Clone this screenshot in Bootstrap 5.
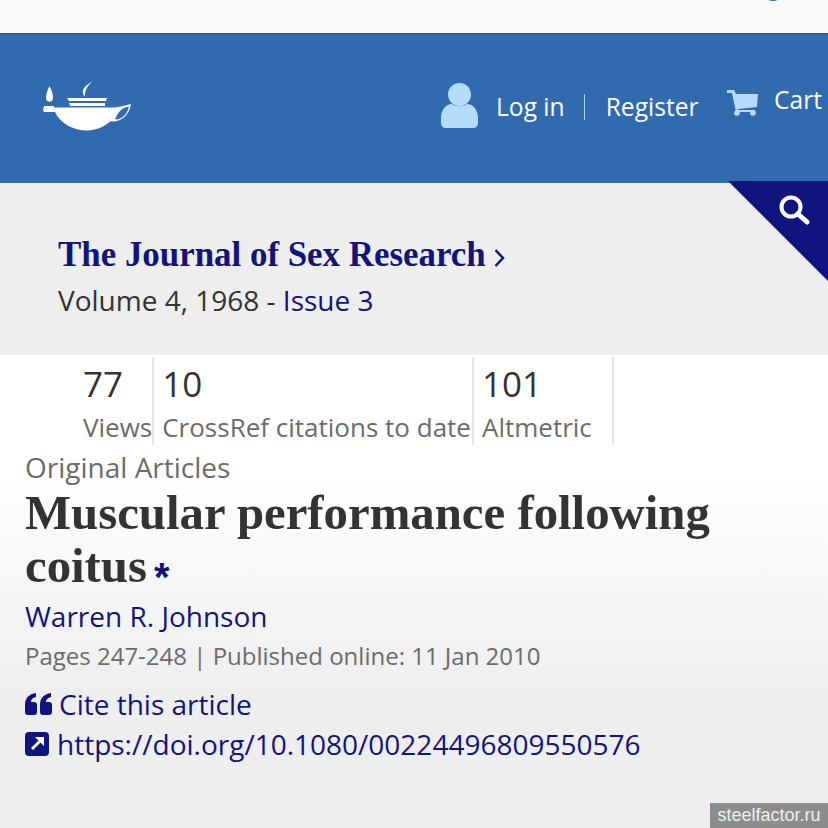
<!DOCTYPE html>
<html lang="en"><head><meta charset="utf-8"><title>Muscular performance following coitus</title>
<link href="https://cdn.jsdelivr.net/npm/bootstrap@5.3.0/dist/css/bootstrap.min.css" rel="stylesheet">
<style>
html,body{height:828px;overflow:hidden}
body{font-family:"Open Sans","Noto Sans",sans-serif;background:#eee;color:#333;position:relative;width:828px}
a{text-decoration:none;color:#10147e}
.strip{height:33px;background:#f8f8f8;position:relative;overflow:hidden}
.dot{position:absolute;left:766px;top:-7px;width:14px;height:8px;border-radius:50%;background:#2f6bae}
.masthead{height:150px;background:#2f6bae;border-top:1px solid #23568f;padding-left:43px}
.lamp{display:block;width:88px;height:50px;margin-top:47px}
.acct{position:absolute;left:441px;top:84px;height:46px}
.acct a{color:#fff;font-size:24.6px;font-weight:500;line-height:32px}
.sep{width:1px;height:26px;background:#a9d3f5;margin:0 21px 0 19px}
.cartlink{position:absolute;left:727px;top:84px;height:32px}
.cartlink a{color:#fff;font-size:24.6px;font-weight:500;line-height:32px}
.journal{height:172px;padding:50px 0 0 58px;position:relative}
.jname{font-family:"Liberation Serif",serif;font-weight:700;font-size:34.9px;line-height:44px;color:#10147e}
.vol{font-size:28px;line-height:36px;margin-top:5px}
.corner{position:absolute;right:0;top:-2px;width:100px;height:100px;background:#10147e;clip-path:polygon(0 0,100% 0,100% 100%)}
.article{height:473px;background:linear-gradient(#fff 0,#fff 120px,#eee 340px);padding:2px 0 0 25px}
.stats{margin-left:47px}
.stat{border-right:2px solid #e4e4e4;padding:0 1px 0 8px;height:88px}
.stat:first-child{padding:0 0 0 11px}
.num{font-size:35px;line-height:54px;color:#333}
.lbl{font-size:26px;line-height:32px;color:#6b6b6b;white-space:nowrap}
.cat{font-size:28px;line-height:36px;color:#6b6b6b;margin-top:4px}
h1.ttl{font-family:"Liberation Serif",serif;font-weight:700;font-size:48.8px;line-height:53px;color:#333;margin:2px 0 0}
.ast{color:#10147e;font-size:40px;font-family:"Liberation Sans",sans-serif;margin-left:7px;display:inline-block;height:30px;line-height:30px;vertical-align:-9px}
.auth{font-size:28px;line-height:36px;margin-top:5px}
.meta{font-size:24px;line-height:34px;color:#6b6b6b;margin-top:5px}
.lnk{font-size:28px;line-height:38px}
.wm{position:absolute;right:0;bottom:0;width:118px;height:25px;background:#8c8c8c;color:#eee;font-family:"Liberation Sans",sans-serif;font-size:18px;line-height:25px;text-align:center}
</style></head><body>
<div class="strip"><span class="dot"></span></div>
<header class="masthead">
<svg class="lamp" viewBox="0 0 88 50" fill="#fff"><path d="M6.500 5C4.500 9 3 13 3 17C3 22 10 22 10 17C10 13 8.500 9 6.500 5Z"/><path d="M50 0C43 4 39 8 40 11.500C40 13.500 41 14.500 42 15.500C41.500 9 45 4 50 0Z"/><path d="M24 17H64L63 20H26Z"/><path d="M26 22H62V25H27Z"/><path fill-rule="evenodd" d="M1 25H11V26.500H72C77 25.500 83 24.500 88 23C86 34 79 40.500 70 40.500H67C61 46 53 49.500 44 49.500C30 49.500 17 42 12 31H1L0 29Z M86 25.500C79 26.500 75 31 72 38.500C80 38.500 84 33 86 25.500Z"/></svg>
</header>
<div class="acct d-flex align-items-center"><svg width="37" height="46" viewBox="0 0 37 46" fill="#b5dcfb" style="margin-top:-2px"><circle cx="18.500" cy="11.500" r="11.500"/><path d="M0 35C0 27 5 21 11 21C14 24 23 24 26 21C32 21 37 27 37 35V40C37 43 35 45 32 45H5C2 45 0 43 0 40Z"/></svg><a href="#" style="margin-left:18px">Log in</a><span class="sep"></span><a href="#">Register</a></div>
<div class="cartlink d-flex align-items-center"><svg width="32" height="27" viewBox="0 0 32 27" fill="#b5dcfb" style="margin-top:5px"><path d="M0 1H7L9 5H31L30 18L11 20L11.500 21H28V23H9L5 4H0Z"/><circle cx="10" cy="24" r="2.800"/><circle cx="26" cy="24" r="2.800"/></svg><a href="#" style="margin-left:15px">Cart</a></div>
<section class="journal">
<span class="corner"></span>
<svg style="position:absolute;left:779px;top:12px" width="31" height="31" viewBox="0 0 31 31" fill="none" stroke="#fff"><circle cx="12" cy="12" r="9.500" stroke-width="4"/><path d="M19 19L28 27" stroke-width="5" stroke-linecap="round"/></svg>
<div class="jname"><a href="#">The Journal of Sex Research</a> <svg width="11" height="20" viewBox="0 0 11 20" fill="none" stroke="#10147e" stroke-width="2.500"><path d="M1.500 2L9 10L1.500 18"/></svg></div>
<div class="vol">Volume 4, 1968 - <a href="#">Issue 3</a></div>
</section>
<main class="article">
<div class="stats d-flex">
<div class="stat"><div class="num">77</div><div class="lbl">Views</div></div>
<div class="stat"><div class="num">10</div><div class="lbl">CrossRef citations to date</div></div>
<div class="stat" style="width:140px"><div class="num">101</div><div class="lbl">Altmetric</div></div>
</div>
<div class="cat">Original Articles</div>
<h1 class="ttl">Muscular performance following coitus<span class="ast">*</span></h1>
<div class="auth"><a href="#">Warren R. Johnson</a></div>
<div class="meta">Pages 247-248 | Published online: 11 Jan 2010</div>
<div class="lnk d-flex align-items-center" style="margin-top:12px"><svg width="27" height="22" viewBox="0 0 27 22" fill="#10147e" style="margin-right:7px"><path d="M0 12C0 5 4 1 11 0V4C7 5 6 7 6 9H9C11 9 12 10 12 12V19C12 21 11 22 9 22H3C1 22 0 21 0 19Z"/><path d="M15 12C15 5 19 1 26 0V4C22 5 21 7 21 9H24C26 9 27 10 27 12V19C27 21 26 22 24 22H18C16 22 15 21 15 19Z"/></svg><a href="#">Cite this article</a></div>
<div class="lnk d-flex align-items-center" style="margin-top:2px"><svg width="24" height="24" viewBox="0 0 24 24" class="me-2"><rect width="24" height="24" rx="4" fill="#10147e"/><path d="M10 5H19V14L15.500 10.500L8 18L6 16L13.500 8.500Z" fill="#fff"/></svg><a href="#">https://doi.org/10.1080/00224496809550576</a></div>
</main>
<div class="wm">steelfactor.ru</div>
</body></html>
